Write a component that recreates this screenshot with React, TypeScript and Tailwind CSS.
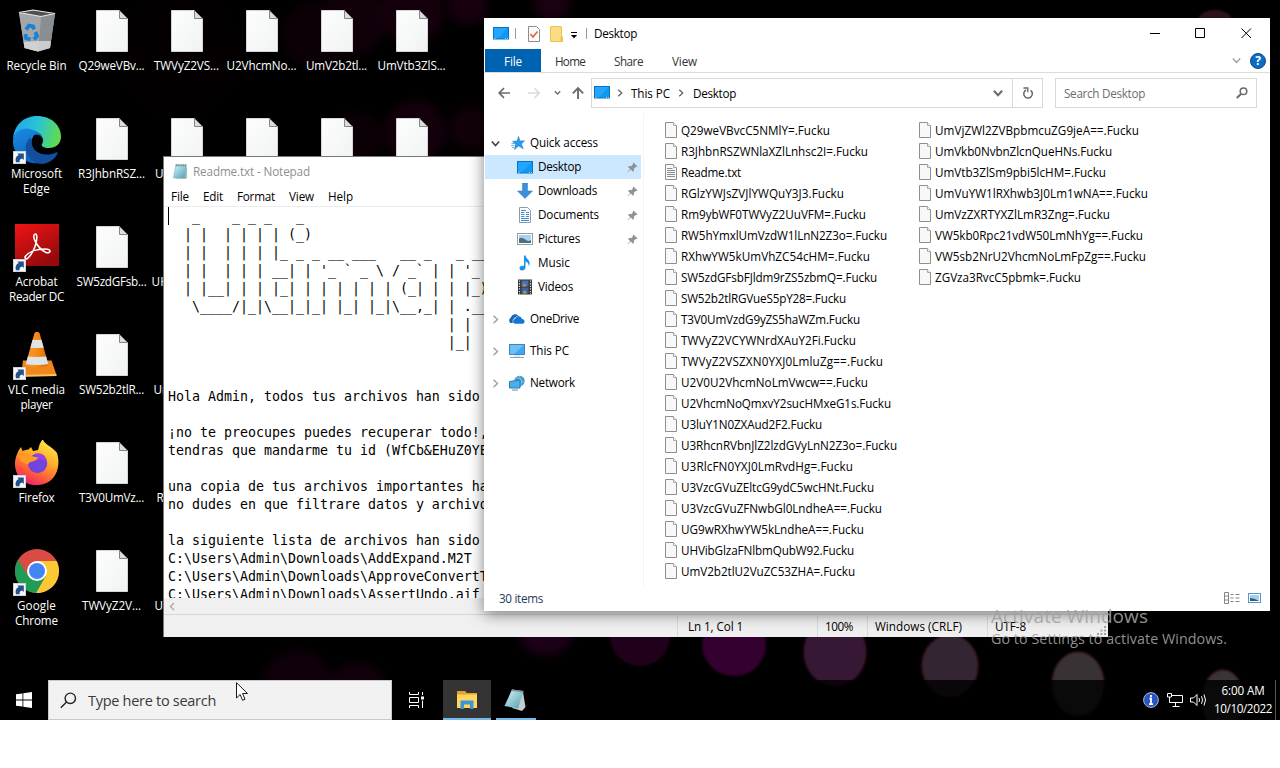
import { useLayoutEffect, useRef, type ReactNode } from "react";

const UI = "font-['Open_Sans','Noto_Sans',sans-serif]";

/** Single-line label whose tracking is tuned so that it spans `w` pixels. */
function T({ w, className = "", children }: { w: number; className?: string; children: string }) {
  const ref = useRef<HTMLSpanElement>(null);
  useLayoutEffect(() => {
    const el = ref.current;
    if (!el) return;
    el.style.letterSpacing = "0px";
    const natural = el.getBoundingClientRect().width;
    el.style.letterSpacing = `${(w - natural) / children.length}px`;
  }, [w, children]);
  return (
    <span ref={ref} className={`inline-block whitespace-pre ${className}`}>
      {children}
    </span>
  );
}

/* ---------- desktop icons ---------- */

function Shortcut() {
  return (
    <g>
      <rect x="0.5" y="35.5" width="12" height="12" fill="#f4f6f8" stroke="#cfd4d8" />
      <path d="M3 46.300C2 42.500 3.300 40 5.800 39L4.300 37.500H10.800V44L9.200 42.400C7 42.700 6.300 44 6.600 46.300z" fill="#234f8c" />
    </g>
  );
}

function Svg48({ children }: { children: ReactNode }) {
  return (
    <svg width="48" height="48" viewBox="0 0 48 48">
      {children}
    </svg>
  );
}

function Blank() {
  return (
    <Svg48>
      <defs>
        <linearGradient id="pg" x1="0" y1="0" x2="1" y2="1">
          <stop offset="0" stopColor="#fdfdfd" />
          <stop offset="1" stopColor="#f1f3f3" />
        </linearGradient>
      </defs>
      <path d="M8.500 2.500H31.500L39.500 10.500V43.500H8.500z" fill="url(#pg)" stroke="#d6d6d6" />
      <path d="M31.500 2.500V10.500H39.500z" fill="#dcdcdc" stroke="#858585" />
    </Svg48>
  );
}

function RecycleBin() {
  return (
    <Svg48>
      <path d="M6 4.500 20 2l22 3.500-5 34.500-12 3.500-13.500-3.500z" fill="#b4b7b9" />
      <path d="M6 4.500 28 8.500l-3 35-13.500-3.500z" fill="#a4a7a9" />
      <path d="M28 8.500 42 5.500l-5 34.500-12 3.500z" fill="#8b8e90" />
      <path d="M10.700 34 25.500 33 38 33l-1 7-12 3.500-13.500-3.500z" fill="#dadcdd" opacity=".8" />
      <path d="M6 4.500 20 2l22 3.500-14 3z" fill="#4e5254" stroke="#e4e6e7" strokeWidth="1.200" />
      <g fill="none" stroke="#1683d8" strokeWidth="3.800">
        <path d="M13 21.500l3-4 4 .8 1 3" />
        <path d="M22.500 24l1.500 4-3 3.500" />
        <path d="M17.500 31.500l-4.500-1.500-.6-4" />
      </g>
    </Svg48>
  );
}

function Edge() {
  return (
    <Svg48>
      <defs>
        <linearGradient id="e1" x1="0" y1=".3" x2="1" y2=".5">
          <stop offset="0" stopColor="#1fa6e8" />
          <stop offset=".5" stopColor="#2bc5d5" />
          <stop offset="1" stopColor="#62dc4a" />
        </linearGradient>
        <linearGradient id="e2" x1="0" y1="0" x2=".5" y2="1">
          <stop offset="0" stopColor="#1a8fe0" />
          <stop offset="1" stopColor="#0b5fc0" />
        </linearGradient>
      </defs>
      <path d="M0 23C1 9 11 0 24 0c14 0 24 9 24 20.500 0 8-6 11.500-12 11.500-5 0-8-1.500-7.500-3.500C31 27 31 18 23 16 13 12 2 15 0 23z" fill="url(#e1)" />
      <path d="M0 24C1 14 12 10 20 14c6 2 9 6 9.500 9-3-4-8-4-10.500 0-4 9 3 18 13 17l2 5C20 52-1 43 0 24z" fill="url(#e2)" />
      <path d="M16.500 22C8 32 15 46 28 48c8-.5 14-5 16.500-10.500.3-1-.5-1.500-1.500-1C31 42 17 36 19 24z" fill="#124f9e" />
      <path d="M23 18.500c4.500 0 7 3.500 6.500 6.500-.5 2.500-1.500 3-1 4.500 1.500 3 6 3.500 9 2.500-8 5-18 0-18-7.500 0-3 1-6 3.500-6z" fill="#030308" />
      <Shortcut />
    </Svg48>
  );
}

function Acrobat() {
  return (
    <Svg48>
      <defs>
        <linearGradient id="ac" x1="0" y1="0" x2=".5" y2="1">
          <stop offset="0" stopColor="#f01414" />
          <stop offset="1" stopColor="#960a0c" />
        </linearGradient>
      </defs>
      <rect x="2" y="0" width="44" height="42" fill="url(#ac)" />
      <path d="M12 33c3-5 11-8 20-8 7 0 6 5 1 3.500C24 24 19 13 21.500 10.500c3-2.500 3 5 .5 12-2 6-7 13-9.500 12.500z" fill="none" stroke="#fff" strokeWidth="1.600" />
      <Shortcut />
    </Svg48>
  );
}

function Vlc() {
  return (
    <Svg48>
      <defs>
        <linearGradient id="vl" x1="0" x2="1">
          <stop offset="0" stopColor="#f79a2c" />
          <stop offset=".5" stopColor="#f78a16" />
          <stop offset="1" stopColor="#d56a06" />
        </linearGradient>
        <clipPath id="cone">
          <path d="M21.500 1q2.500-2.500 5 0L35.500 33q-11.500 6-23 0z" />
        </clipPath>
      </defs>
      <path d="M10 28.500H38.500L43.500 43H8z" fill="#f0871a" />
      <path d="M7 43 43.500 42V44L7 45z" fill="#fcc060" />
      <path d="M21.500 1q2.500-2.500 5 0L35.500 33q-11.500 6-23 0z" fill="url(#vl)" />
      <g clipPath="url(#cone)" fill="#e0e4e8">
        <path d="M10 7q14 2 28 0v8q-14 2-28 0z" />
        <path d="M8 23q16 4 32 0v8q-16 4-32 0z" />
      </g>
      <Shortcut />
    </Svg48>
  );
}

function Firefox() {
  return (
    <Svg48>
      <defs>
        <linearGradient id="ff" x1=".8" y1="0" x2=".3" y2="1">
          <stop offset="0" stopColor="#fff04a" />
          <stop offset=".4" stopColor="#ffb02a" />
          <stop offset=".75" stopColor="#ff5a36" />
          <stop offset="1" stopColor="#e8207a" />
        </linearGradient>
      </defs>
      <g transform="translate(0 -1)">
        <path d="M2 25C2 18 5 12 8 8l1.500 4q3-1.500 6-1.500L18 8l2 4 5-1Q26 4 30 0c0 5 10 8 14 14 4 12 0 31-19 32C12 47 2 38 2 25z" fill="url(#ff)" />
        <circle cx="24.500" cy="24.500" r="9.700" fill="#6f45dd" />
        <path d="M22 14.500q10-2 12 8-4-3-9-2z" fill="#a23fe0" />
        <path d="M5 17q8-6 13 0l7 1.500q-1 3-6 4-3 .500-4 3-7-1-10-8.500z" fill="#ff9b24" />
      </g>
      <Shortcut />
    </Svg48>
  );
}

function Chrome() {
  return (
    <Svg48>
      <g transform="translate(0 -1)">
        <circle cx="24" cy="24" r="22" fill="#d94c43" />
        <path d="M24 14H43.600A22 22 0 0 1 23 46L32.700 29z" fill="#fcc934" />
        <path d="M4.900 13.100A22 22 0 0 0 23 46l9.600-17-8.600 5-8.700-5z" fill="#1f9d55" />
        <circle cx="24" cy="24" r="10" fill="#fff" />
        <circle cx="24" cy="24" r="8" fill="#4286f4" />
      </g>
      <Shortcut />
    </Svg48>
  );
}

type Line = [string, number];
type Cell = { icon: ReactNode; lines: Line[] };
const file = (name: string, w: number): Cell => ({ icon: <Blank />, lines: [[name, w]] });

const columns: Cell[][] = [
  [
    { icon: <RecycleBin />, lines: [["Recycle Bin", 60]] },
    { icon: <Edge />, lines: [["Microsoft", 51], ["Edge", 27]] },
    { icon: <Acrobat />, lines: [["Acrobat", 42], ["Reader DC", 55]] },
    { icon: <Vlc />, lines: [["VLC media", 57], ["player", 32]] },
    { icon: <Firefox />, lines: [["Firefox", 36]] },
    { icon: <Chrome />, lines: [["Google", 39], ["Chrome", 43]] },
  ],
  [
    file("Q29weVBv...", 66),
    file("R3JhbnRSZ...", 67),
    file("SW5zdGFsb...", 70),
    file("SW52b2tlR...", 65),
    file("T3V0UmVz...", 65),
    file("TWVyZ2V...", 59),
  ],
  [
    file("TWVyZ2VS...", 65),
    file("UG9wRXhw...", 63),
    file("UHVibGlza...", 70),
    file("UmVjZWl2...", 66),
    file("RGlzYWJs...", 60),
    file("U3RlcFN0...", 64),
  ],
  [file("U2VhcmNo...", 70), file("U2V0U2Vh...", 68)],
  [file("UmV2b2tl...", 61), file("UmVkb0Nv...", 66)],
  [file("UmVtb3ZlS...", 68), file("UmVuYW1l...", 66)],
];

function DesktopIcons() {
  return (
    <div className="-ml-px flex text-[11.7px] leading-[15px] text-white [text-shadow:0_1px_2px_#000]">
      {columns.map((cells, c) => (
        <div key={c} className="flex w-[75px] flex-col">
          {cells.map((cell, r) => (
            <div key={r} className="flex h-[108px] flex-col items-center pt-[8px]">
              {cell.icon}
              <div className="mt-[2px] flex flex-col items-center">
                {cell.lines.map(([t, w]) => (
                  <T key={t} w={w}>{t}</T>
                ))}
              </div>
            </div>
          ))}
        </div>
      ))}
    </div>
  );
}

/* ---------- wallpaper ---------- */

function Wallpaper() {
  return (
    <svg width="1280" height="720" viewBox="0 0 1280 720" className="absolute left-0 top-0">
      <defs>
        <filter id="soft" x="-20%" y="-20%" width="140%" height="140%" colorInterpolationFilters="sRGB">
          <feGaussianBlur stdDeviation="1.300" />
        </filter>
        <filter id="softer" x="-30%" y="-30%" width="160%" height="160%" colorInterpolationFilters="sRGB">
          <feGaussianBlur stdDeviation="4" />
        </filter>
      </defs>
      <rect width="1280" height="720" fill="#000" />
      <g filter="url(#softer)">
        <circle cx="315" cy="35" r="34" fill="#0b0006" />
        <circle cx="352" cy="22" r="33" fill="#10000a" />
        <circle cx="412" cy="12" r="32" fill="#14000c" />
        <circle cx="468" cy="5" r="20" fill="#18000f" />
        <circle cx="415" cy="132" r="31" fill="#14000c" />
        <circle cx="355" cy="140" r="28" fill="#0b0006" />
        <circle cx="472" cy="128" r="22" fill="#12000a" />
        <circle cx="180" cy="55" r="60" fill="#040002" />
        <circle cx="298" cy="686" r="36" fill="#0f000b" />
        <circle cx="357" cy="692" r="30" fill="#12000a" />
        <circle cx="546" cy="628" r="28" fill="#1c0018" />
        <circle cx="552" cy="4" r="18" fill="#1b0012" />
      </g>
      <g filter="url(#soft)">
        <circle cx="640" cy="636" r="30" fill="#21001b" />
        <ellipse cx="734" cy="645" rx="32" ry="31" fill="#340030" />
        <ellipse cx="835" cy="652" rx="31" ry="34" fill="#371834" stroke="#46122c" />
        <ellipse cx="950" cy="666" rx="28" ry="31" fill="#342532" stroke="#4a1424" />
        <ellipse cx="1078" cy="684" rx="26" ry="32" fill="#383234" stroke="#4e1620" />
        <ellipse cx="1223" cy="700" rx="21" ry="30" fill="#3a3434" stroke="#4e1c20" />
        <ellipse cx="1215" cy="20" rx="17" ry="10" fill="#32141e" />
      </g>
    </svg>
  );
}

/* ---------- notepad ---------- */

const note = String.raw`   _    _ _ _   _
  | |  | | | | (_)
  | |  | | | |_ _ _ __ ___   __ _   _ __
  | |  | | | __| | '_ ${"`"} _ \ / _${"`"} | | '_ \
  | |__| | | |_| | | | | | | (_| | | |_)
   \____/|_|\__|_|_| |_| |_|\__,_| | .__
                                   | |
                                   |_|


Hola Admin, todos tus archivos han sido

¡no te preocupes puedes recuperar todo!,
tendras que mandarme tu id (WfCb&EHuZ0YE

una copia de tus archivos importantes ha
no dudes en que filtrare datos y archivo

la siguiente lista de archivos han sido
C:\Users\Admin\Downloads\AddExpand.M2T
C:\Users\Admin\Downloads\ApproveConvertT
C:\Users\Admin\Downloads\AssertUndo.aif`;

function NotepadIcon({ size }: { size: number }) {
  return (
    <svg width={size} height={size} viewBox="0 0 18 18">
      <defs>
        <linearGradient id="np" x1="0" y1="0" x2="1" y2="1">
          <stop offset="0" stopColor="#d8f1f4" />
          <stop offset=".5" stopColor="#8ccbd8" />
          <stop offset="1" stopColor="#4fa0b2" />
        </linearGradient>
      </defs>
      <path d="M14 4l2 .5V16l-1.500 1L4 16.500z" fill="#aebcbf" />
      <path d="M4 2.500H15L13.500 16H1.500z" fill="url(#np)" stroke="#6fa9b4" strokeWidth=".5" />
      <path d="M4.500 1v2.500M6.500 1v2.500M8.500 1v2.500M10.500 1v2.500M12.500 1v2.500M14.500 1v2.500" stroke="#40636b" strokeWidth=".8" />
    </svg>
  );
}

function Notepad() {
  return (
    <section className="absolute left-[163px] top-[156px] flex h-[481px] w-[945px] flex-col overflow-hidden border-l border-t border-[#777] bg-white text-[11.7px]">
      <header className="flex h-[29px] shrink-0 items-center gap-[4px] pl-[8px] text-[#8f8f8f]">
        <NotepadIcon size={17} />
        <T w={117}>Readme.txt - Notepad</T>
      </header>
      <nav className="flex h-[21px] shrink-0 items-start border-b border-[#ececec] pl-[7px] leading-[20px] text-black">
        <T w={18} className="mr-[14px]">File</T>
        <T w={20} className="mr-[14px]">Edit</T>
        <T w={38} className="mr-[14px]">Format</T>
        <T w={25} className="mr-[14px]">View</T>
        <T w={25}>Help</T>
      </nav>
      <div className="relative h-[391px] shrink-0 overflow-hidden pl-[4px] pt-px">
        <pre className="font-['DejaVu_Sans_Mono','Liberation_Mono',monospace] text-[13.29px] leading-[18px] text-black">{note}</pre>
        <div className="absolute left-[4px] top-0 h-[18px] w-px bg-black" />
      </div>
      <div className="flex h-[17px] shrink-0 items-center border-b border-[#d6d6d6] bg-[#f0f0f0] pl-[5px]">
        <svg width="6" height="9" viewBox="0 0 6 9">
          <path d="M5 1 1.500 4.500 5 8" fill="none" stroke="#a8a8a8" strokeWidth="1.400" />
        </svg>
      </div>
      <footer className="flex flex-1 items-stretch bg-[#f0f0f0] leading-[23px] text-black">
        <div className="w-[514px] border-r border-[#dadada]" />
        <div className="w-[140px] border-r border-[#dadada] pl-[10px]"><T w={55}>Ln 1, Col 1</T></div>
        <div className="w-[50px] border-r border-[#dadada] pl-[7px]"><T w={28}>100%</T></div>
        <div className="w-[120px] border-r border-[#dadada] pl-[7px]"><T w={87}>Windows (CRLF)</T></div>
        <div className="flex-1 pl-[7px]"><T w={31}>UTF-8</T></div>
        <svg width="12" height="22" viewBox="0 0 12 22" fill="#a5a5a5">
          <path d="M8 11h2v2H8zM8 14.500h2v2H8zM8 18h2v2H8zM4.500 14.500h2v2h-2zM4.500 18h2v2h-2zM1 18h2v2H1z" />
        </svg>
      </footer>
    </section>
  );
}

/* ---------- explorer ---------- */

function Monitor({ w = 16, h = 13 }: { w?: number; h?: number }) {
  return (
    <svg width={w} height={h} viewBox="0 0 16 13">
      <rect x=".5" y=".5" width="15" height="11.500" fill="#0f98f4" stroke="#0c72c0" />
      <path d="M1 1h14L5 11H1z" fill="#22a6ff" />
      <path d="M1.500 11.500h1M12 11.500h1M14 11.500h.8" stroke="#b8e0fc" />
    </svg>
  );
}

function Page({ lined }: { lined?: boolean }) {
  return (
    <svg width="12" height="16" viewBox="0 0 12 16">
      <path d="M.5.5h8l3 3v12H.5z" fill="#f8f8f8" stroke="#8e8e8e" />
      <path d="M8.500.5v3h3" fill="#fff" stroke="#a8a8a8" />
      {lined && <path d="M2 4.500h5.500M2 6.500h8M2 8.500h8M2 10.500h8M2 12.500h8" stroke="#8d8d8d" />}
    </svg>
  );
}

function Pin() {
  return (
    <svg width="11" height="11" viewBox="0 0 11 11">
      <path d="M6.500.5l4 4-1 .6-.8-.2-1.900 2 .1 2.100-.9.8-2.200-2.200L.7 10.500l-.3-.2 2.800-3.200L1 5l.9-.9 2.200.1L6 2.300 5.900 1.200z" fill="#8b9298" />
    </svg>
  );
}

function Chevron({ dir, color, s = 9, sw = 1.4 }: { dir: "r" | "d"; color: string; s?: number; sw?: number }) {
  return (
    <svg width={s} height={s} viewBox="0 0 9 9">
      <path d={dir === "r" ? "M2.500.8 6.500 4.500 2.500 8.200" : "M.8 2.500 4.500 6.500 8.200 2.500"} fill="none" stroke={color} strokeWidth={sw} />
    </svg>
  );
}

const I16 = ({ children }: { children: ReactNode }) => (
  <svg width="16" height="16" viewBox="0 0 16 16">{children}</svg>
);

const starIcon = (
  <I16>
    <path d="M8.500 1.500l1.500 4.500 4.500-.3-3 3.300 1.800 4.800L8.500 11 4.500 14.500l1-5L2.500 6.300l4.500-.3z" fill="#2e9ae8" stroke="#1b7cc8" strokeWidth=".5" />
    <path d="M1.500 8.500h3M1 10.500h3.500M2 12.500h2.500" stroke="#5cb2f0" strokeWidth=".9" />
  </I16>
);
const downIcon = <I16><path d="M5.500 0h5v8H15.500L8 15.500.5 8h5z" fill="#3c8fdc" stroke="#2c78c0" strokeWidth=".5" /></I16>;
const docIcon = (
  <I16>
    <path d="M2.500.5h8l3 3v12h-11z" fill="#fff" stroke="#8d9aa5" />
    <path d="M4 5.500h3.500M9 5.500h3M4 7.500h3.500M9 7.500h3M4 9.500h3.500M9 9.500h3M4 11.500h8M4 13.500h8M4 3.500h5" stroke="#3c90d4" />
  </I16>
);
const picIcon = (
  <I16>
    <rect x=".5" y="2.500" width="15" height="11" fill="#fff" stroke="#9a9a9a" />
    <rect x="2" y="4" width="12" height="8" fill="#a8d2f2" />
    <path d="M2 7.500q3-2 6 .8t6 .7v3H2z" fill="#4b6f84" />
  </I16>
);
const musicIcon = <I16><path d="M7 .5h1.500C9 4 13.500 5 12.500 9.500l-1 1.500C12 8 10 7 8.500 6.500v6C8.500 16 2.500 16.500 2.500 13.200 2.500 10.800 5.500 10.300 7 11z" fill="#1792ee" /></I16>;
const videoIcon = (
  <I16>
    <rect x="1" y=".5" width="14" height="15" fill="#333" />
    <path d="M2.500 1.500v14M13.500 1.500v14" stroke="#e4e4e4" strokeWidth="1.200" strokeDasharray="1.300 1.300" />
    <rect x="4.500" y="1.500" width="7" height="6" fill="#4a6fb0" />
    <rect x="4.500" y="8.500" width="7" height="6" fill="#3d62a4" />
    <path d="M5 7.500l2.500-3.500 2 3.500zM5 14.500l3-3.500 2 3.500z" fill="#b09a4c" />
  </I16>
);
const cloudIcon = (
  <I16>
    <path d="M1.500 12A3.200 3.200 0 0 1 2 6.500C2.500 3.500 7 1.500 10 5l-4 1.500C4.500 7.500 4 9.500 5 12z" fill="#1266b8" />
    <path d="M6 13a2.800 2.800 0 0 1 0-5.500c1-3.500 6-3.500 6.800 0 3.500.5 4 4.700 1 5.500z" fill="#1178d4" stroke="#fff" strokeWidth=".5" />
  </I16>
);
const pcIcon = (
  <I16>
    <rect x=".5" y="1.500" width="15" height="10" fill="#40a8f0" stroke="#3c86b8" />
    <path d="M1 2h14L5 11H1z" fill="#6cc2f8" />
    <path d="M1 14.500h14" stroke="#7fa5bb" />
    <path d="M5 13h6" stroke="#c2d4de" />
  </I16>
);
const netIcon = (
  <I16>
    <circle cx="10.500" cy="6" r="5.200" fill="#3f98cc" />
    <path d="M7 2.500q4 1 8 5M10 1q3.500 4 2.500 9" stroke="#8fcdec" fill="none" strokeWidth=".8" />
    <path d="M.5 6.500 11 5v8H.5z" fill="#48aef0" stroke="#2d78ae" />
    <path d="M3 15h6" stroke="#5b8dac" />
  </I16>
);

const quick: { label: string; w: number; icon: ReactNode; pin?: boolean; on?: boolean }[] = [
  { label: "Desktop", w: 43, icon: <Monitor />, pin: true, on: true },
  { label: "Downloads", w: 59, icon: downIcon, pin: true },
  { label: "Documents", w: 61, icon: docIcon, pin: true },
  { label: "Pictures", w: 42, icon: picIcon, pin: true },
  { label: "Music", w: 32, icon: musicIcon },
  { label: "Videos", w: 35, icon: videoIcon },
];

const roots: [string, number, ReactNode][] = [
  ["OneDrive", 49, cloudIcon],
  ["This PC", 39, pcIcon],
  ["Network", 45, netIcon],
];

const filesA: Line[] = [
  ["Q29weVBvcC5NMlY=.Fucku", 149],
  ["R3JhbnRSZWNlaXZlLnhsc2I=.Fucku", 187],
  ["Readme.txt", 60],
  ["RGlzYWJsZVJlYWQuY3J3.Fucku", 163],
  ["Rm9ybWF0TWVyZ2UuVFM=.Fucku", 185],
  ["RW5hYmxlUmVzdW1lLnN2Z3o=.Fucku", 206],
  ["RXhwYW5kUmVhZC54cHM=.Fucku", 189],
  ["SW5zdGFsbFJldm9rZS5zbmQ=.Fucku", 196],
  ["SW52b2tlRGVueS5pY28=.Fucku", 165],
  ["T3V0UmVzdG9yZS5haWZm.Fucku", 179],
  ["TWVyZ2VCYWNrdXAuY2Fi.Fucku", 175],
  ["TWVyZ2VSZXN0YXJ0LmluZg==.Fucku", 202],
  ["U2V0U2VhcmNoLmVwcw==.Fucku", 187],
  ["U2VhcmNoQmxvY2sucHMxeG1s.Fucku", 210],
  ["U3luY1N0ZXAud2F2.Fucku", 141],
  ["U3RhcnRVbnJlZ2lzdGVyLnN2Z3o=.Fucku", 216],
  ["U3RlcFN0YXJ0LmRvdHg=.Fucku", 172],
  ["U3VzcGVuZEltcG9ydC5wcHNt.Fucku", 193],
  ["U3VzcGVuZFNwbGl0LndheA==.Fucku", 201],
  ["UG9wRXhwYW5kLndheA==.Fucku", 183],
  ["UHVibGlzaFNlbmQubW92.Fucku", 173],
  ["UmV2b2tlU2VuZC53ZHA=.Fucku", 174],
];
const filesB: Line[] = [
  ["UmVjZWl2ZVBpbmcuZG9jeA==.Fucku", 204],
  ["UmVkb0NvbnZlcnQueHNs.Fucku", 177],
  ["UmVtb3ZlSm9pbi5lcHM=.Fucku", 171],
  ["UmVuYW1lRXhwb3J0Lm1wNA==.Fucku", 213],
  ["UmVzZXRTYXZlLmR3Zng=.Fucku", 175],
  ["VW5kb0Rpc21vdW50LmNhYg==.Fucku", 208],
  ["VW5sb2NrU2VhcmNoLmFpZg==.Fucku", 211],
  ["ZGVza3RvcC5pbmk=.Fucku", 146],
];

function FileColumn({ files }: { files: Line[] }) {
  return (
    <div className="flex w-[254px] flex-col">
      {files.map(([name, w]) => (
        <div key={name} className="flex h-[21px] items-center gap-[4px]">
          <Page lined={name === "Readme.txt"} />
          <T w={w} className="leading-[20px]">{name}</T>
        </div>
      ))}
    </div>
  );
}

function Explorer() {
  return (
    <section className="absolute left-[484px] top-[18px] flex h-[593px] w-[786px] flex-col bg-white text-[11.7px] text-black shadow-[0_3px_14px_rgba(0,0,0,0.5)]">
      <header className="flex h-[31px] shrink-0 items-center pl-[9px]">
        <Monitor />
        <div className="ml-[6px] h-[11px] w-px bg-[#9a9a9a]" />
        <svg className="ml-[12px]" width="12" height="16" viewBox="0 0 12 16">
          <path d="M.5.5h8l3 3v12H.5z" fill="#fafafa" stroke="#8c8c8c" />
          <path d="M2.500 8l2.500 3 4.500-5.500" fill="none" stroke="#e0643c" strokeWidth="1.700" />
        </svg>
        <svg className="ml-[10px]" width="13" height="16" viewBox="0 0 13 16">
          <path d="M.5.5h11V10l1 1v4.500H.5z" fill="#fbdc82" stroke="#ecc45c" />
          <path d="M10.500 15V10.500l2 .5v4.500z" fill="#eec050" />
        </svg>
        <svg className="ml-[7px] mt-[2px]" width="8" height="8" viewBox="0 0 8 8">
          <path d="M1 1.500h6" stroke="#000" strokeWidth="1" />
          <path d="M.8 4h6.400L4 7.300z" />
        </svg>
        <div className="ml-[8px] h-[11px] w-px bg-[#9a9a9a]" />
        <T w={43} className="-mt-px ml-[7px] leading-[30px]">Desktop</T>
        <svg className="-mt-[2px] ml-auto mr-[17px]" width="104" height="12" viewBox="0 0 104 12" fill="none" stroke="#000" strokeWidth="1">
          <path d="M1 6.500h10M46.500 1.500h9v9h-9zM92.500 1.500l9.500 9.500M102 1.500 92.500 11" />
        </svg>
      </header>
      <nav className="flex h-[24px] shrink-0 items-center border-b border-[#dcdcdc] leading-[24px] text-[#333]">
        <div className="flex h-[23px] w-[57px] items-center justify-center border-l border-white bg-[#0063b1] text-white"><T w={18}>File</T></div>
        <T w={30} className="ml-[14px]">Home</T>
        <T w={29} className="ml-[29px]">Share</T>
        <T w={25} className="ml-[29px]">View</T>
        <div className="ml-auto mr-[4px] flex items-center gap-[9px]">
          <Chevron dir="d" color="#9a9a9a" sw={1.2} />
          <div className="flex h-[16px] w-[16px] items-center justify-center rounded-full border border-[#0a4a88] bg-[#0c6cc4] text-[12px] font-bold leading-[14px] text-white">?</div>
        </div>
      </nav>
      <div className="flex h-[40px] shrink-0 items-center">
        <svg width="107" height="30" viewBox="0 0 107 30" fill="none" stroke="#6c6c6c" strokeWidth="1.700">
          <path d="M26 15H15.500M20 10.200 15.200 15l4.800 4.800" />
          <path d="M44 15h11M50.500 10.200 55.300 15l-4.800 4.800" stroke="#dcdcdc" />
          <path d="M70.800 13.300 73.500 16l2.700-2.700" strokeWidth="1.400" />
          <path d="M94 21V11M88.800 15.300 94 10l5.200 5.300" strokeWidth="1.900" />
        </svg>
        <div className="flex h-[30px] w-[452px] items-center border border-[#d9d9d9] pl-[2px]">
          <div className="-mt-[2px] flex"><Monitor /></div>
          <div className="ml-[6px] flex"><Chevron dir="r" color="#606060" s={8} /></div>
          <T w={39} className="ml-[7px] leading-[28px]">This PC</T>
          <div className="ml-[7px] flex"><Chevron dir="r" color="#606060" s={8} /></div>
          <T w={43} className="ml-[8px] leading-[28px]">Desktop</T>
          <div className="ml-auto mr-[9px] flex"><Chevron dir="d" color="#6c6c6c" s={10} sw={1.9} /></div>
          <div className="flex h-full w-[30px] items-center justify-center border-l border-[#d9d9d9]">
            <svg width="12" height="12" viewBox="0 0 12 12">
              <path d="M4 3A4.300 4.300 0 1 0 8.600 3.300" fill="none" stroke="#666" strokeWidth="1.500" />
              <path d="M1.500 1h4.300v4.300" fill="none" stroke="#666" strokeWidth="1.300" />
            </svg>
          </div>
        </div>
        <div className="ml-[12px] flex h-[30px] w-[202px] items-center justify-between border border-[#d9d9d9] pl-[8px] pr-[8px] leading-[28px] text-[#6d6d6d]">
          <T w={81}>Search Desktop</T>
          <svg width="12" height="12" viewBox="0 0 12 12" fill="none" stroke="#6a6a6a">
            <circle cx="7.500" cy="4.300" r="3.300" strokeWidth="1.500" />
            <path d="M5.200 6.800.8 11" strokeWidth="2" />
          </svg>
        </div>
      </div>
      <div className="flex flex-1">
        <aside className="w-[160px] border-r border-[#f4f4f4] pt-[18px]">
          <div className="flex h-[24px] items-center pl-[7px]">
            <Chevron dir="d" color="#404040" sw={1.6} />
            <div className="ml-[10px] mr-[4px]">{starIcon}</div>
            <T w={68}>Quick access</T>
          </div>
          {quick.map((q) => (
            <div key={q.label} className={`ml-px mr-[2px] flex h-[24px] items-center pl-[32px] pr-[3px] ${q.on ? "bg-[#cce8ff]" : ""}`}>
              <div className="mr-[5px] flex">{q.icon}</div>
              <T w={q.w}>{q.label}</T>
              {q.pin && <div className="ml-auto"><Pin /></div>}
            </div>
          ))}
          <div className="mt-[8px] flex flex-col gap-[8px]">
            {roots.map(([label, w, icon]) => (
              <div key={label} className="flex h-[24px] items-center pl-[7px]">
                <Chevron dir="r" color="#a0a0a0" />
                <div className="ml-[9px] mr-[5px]">{icon}</div>
                <T w={w}>{label}</T>
              </div>
            ))}
          </div>
        </aside>
        <main className="flex pl-[21px] pt-[6px]">
          <FileColumn files={filesA} />
          <FileColumn files={filesB} />
        </main>
      </div>
      <footer className="flex h-[25px] shrink-0 items-center justify-between pl-[15px] pr-[8px] text-[#1e395b]">
        <T w={44}>30 items</T>
        <svg className="-mt-[2px]" width="38" height="14" viewBox="0 0 38 14">
          <path d="M.5 1.500h4v11h-4zM.5 5h4M.5 9h4" fill="none" stroke="#858585" />
          <path d="M6.500 3.500h3M11.500 3.500h4M6.500 7h3M11.500 7h4M6.500 10.500h3M11.500 10.500h4" stroke="#858585" />
          <rect x="24.500" y="2.500" width="12" height="9" fill="#fff" stroke="#5a94c8" />
          <rect x="26" y="4" width="9" height="6" fill="#9fd0f4" />
          <path d="M26 7q4 0 9 3H26z" fill="#2d5f78" />
        </svg>
      </footer>
    </section>
  );
}

/* ---------- taskbar ---------- */

function Taskbar() {
  return (
    <footer className="absolute left-0 top-[680px] flex h-[40px] w-[1280px] items-stretch bg-black/80 text-white">
      <div className="flex w-[48px] items-center justify-center">
        <svg width="16" height="16" viewBox="0 0 16 16" fill="#fff">
          <path d="M0 2.300 6.500 1.400V7.500H0zM7.300 1.300 16 0V7.500H7.300zM0 8.400H6.500V14.600L0 13.700zM7.300 8.400H16V16L7.300 14.700z" />
        </svg>
      </div>
      <div className="flex w-[344px] items-center border border-[#c8c8c8] bg-[#f2f2f2] pl-[11px] text-[#3a3a3a]">
        <svg width="17" height="17" viewBox="0 0 17 17" fill="none" stroke="#222" strokeWidth="1.400">
          <circle cx="10.300" cy="6.300" r="5.200" />
          <path d="M6.600 10 .8 15.800" />
        </svg>
        <T w={128} className="ml-[11px] mt-px text-[14.5px]">Type here to search</T>
      </div>
      <div className="flex w-[51px] items-center justify-center pr-[3px]">
        <svg width="17" height="16" viewBox="0 0 17 16" fill="none" stroke="#fff">
          <path d="M1.500 0v2.500h9V0M1.500 16v-2.500h9V16M1.500 5.500h9v5h-9zM14.500 0v3M14.500 8.500V16" />
          <path d="M13 4.500h3v3h-3z" fill="#fff" stroke="none" />
        </svg>
      </div>
      <div className="flex w-[48px] items-center justify-center border-b-2 border-[#76b9ed] bg-[#343434]">
        <svg className="mt-px" width="22" height="20" viewBox="0 0 22 20">
          <path d="M1 1h8l2 2h10v3H1z" fill="#e0a22a" />
          <path d="M1 4.500h20V18H1z" fill="#ffd75e" />
          <path d="M4.500 19v-8.500h13V19h-3.500v-4.500h-6V19z" fill="#3d94d8" />
        </svg>
      </div>
      <div className="ml-[5px] flex w-[40px] items-center justify-center border-b-2 border-[#76b9ed]">
        <svg className="-ml-[2px] mt-px" width="22" height="24" viewBox="0 0 22 24">
          <defs>
            <linearGradient id="tn" x1="0" y1="0" x2="1" y2="1">
              <stop offset="0" stopColor="#dff4f6" />
              <stop offset="1" stopColor="#4c9fb4" />
            </linearGradient>
          </defs>
          <path d="M19 4l2.500 15-3.500 4-10-3z" fill="#c5cccd" />
          <path d="M8 1.500 19.500 3 14 20.500.5 18z" fill="url(#tn)" />
          <path d="M8 1.500 19.500 3l-.5 1.500L7.500 3z" fill="#7d9499" />
        </svg>
      </div>
      <div className="ml-auto flex items-center">
        <svg width="16" height="16" viewBox="0 0 16 16">
          <circle cx="8" cy="8" r="7.400" fill="#2a56c4" stroke="#a9b8dc" />
          <path d="M8 3v2.200M6.500 6.700H8V12M6 12.200h4" stroke="#fff" strokeWidth="1.800" fill="none" />
        </svg>
        <svg className="ml-[8px]" width="16" height="14" viewBox="0 0 16 14" fill="none" stroke="#fff">
          <path d="M5 2.500h10.500v7H3M8.500 9.500v3.500M5.500 13.500h7M.5.500h4v3.500h-4zM2.500 4v5.500h2" />
        </svg>
        <svg className="ml-[7px]" width="17" height="14" viewBox="0 0 17 14" fill="none" stroke="#fff">
          <path d="M.5 5h3L7 1.500v11L3.500 9h-3zM9 5q1 2 0 4M11.500 3.200q2 3.800 0 7.600M14 1.500q3 5.500 0 11" />
        </svg>
        <div className="-mt-[2px] ml-[7px] flex flex-col items-center text-[11.7px] leading-[18px]">
          <T w={43}>6:00 AM</T>
          <T w={58}>10/10/2022</T>
        </div>
        <div className="ml-[3px] h-[40px] w-px bg-[#555]" />
        <div className="w-[4px]" />
      </div>
    </footer>
  );
}

export default function App() {
  return (
    <div className={`h-[768px] w-[1280px] overflow-hidden bg-white ${UI}`}>
      <div className="relative h-[720px] w-[1280px] overflow-hidden bg-black">
        <Wallpaper />
        <div className="absolute left-0 top-0">
          <DesktopIcons />
        </div>
        <Notepad />
        <Explorer />
        <div className="absolute left-[991px] top-[605px] flex flex-col items-start text-[#a2a2a2]/90">
          <T w={157} className="text-[19px] leading-[23px]">Activate Windows</T>
          <T w={236} className="text-[14.3px] leading-[21px]">Go to Settings to activate Windows.</T>
        </div>
        <Taskbar />
        <svg className="absolute left-[236px] top-[682px]" width="12" height="19" viewBox="0 0 12 19">
          <path d="M.5.700V16l3.600-3.500 2.500 5.800 2.400-1-2.500-5.800h5z" fill="#fff" stroke="#000" strokeWidth=".9" />
        </svg>
      </div>
    </div>
  );
}
